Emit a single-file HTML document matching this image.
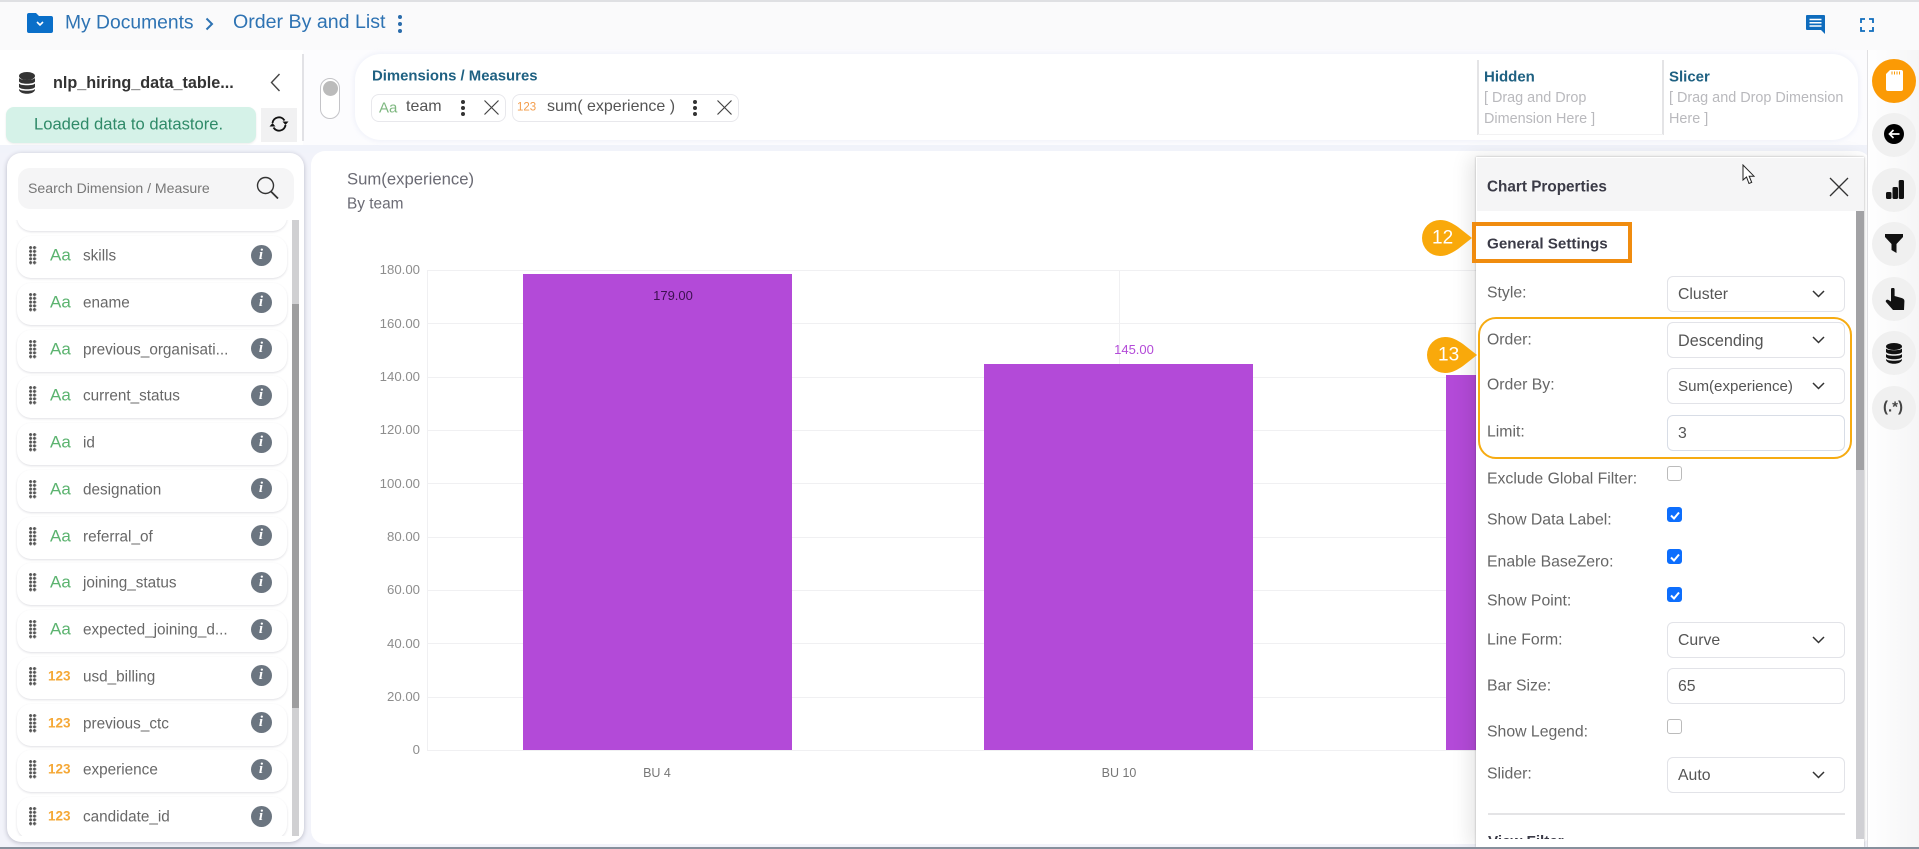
<!DOCTYPE html>
<html><head><meta charset="utf-8"><title>Order By and List</title>
<style>
*{box-sizing:border-box}
html,body{margin:0;padding:0}
body{width:1919px;height:849px;position:relative;overflow:hidden;background:#f2f3fa;font-family:"Liberation Sans",sans-serif;color:#666}
.a{position:absolute}
.t{position:absolute;white-space:nowrap;line-height:1;transform:translateY(-50%)}
.b{font-weight:bold}
.item{position:absolute;left:17px;width:270px;height:42px;background:#fff;border-radius:14px;box-shadow:0 1px 2px rgba(60,60,90,.16)}
.dots{position:absolute;left:12px;top:10px;width:8px;height:19px;background-image:radial-gradient(circle at 1.6px 1.6px,#555 1.35px,transparent 1.7px);background-size:3.9px 3.75px}
.ty{position:absolute;left:33px;top:19px;transform:translateY(-50%);line-height:1;font-size:17px;color:#5bb36f}
.ty.n{left:31px;font-size:13.5px;font-weight:bold;color:#f5a836}
.nm{position:absolute;left:66px;top:20px;transform:translateY(-50%);line-height:1;font-size:15.3px;color:#686868;white-space:nowrap}
.inf{position:absolute;left:233.5px;top:8.5px;width:21px;height:21px;border-radius:50%;background:#6b7580;color:#fff;font:italic bold 15px/21px "Liberation Serif",serif;text-align:center}
.sel{position:absolute;left:1667px;width:178px;height:36px;border:1.5px solid #e2e3e8;border-radius:6px;background:#fff;font-size:15.8px;color:#555;line-height:36px;padding-left:10px}
.sel svg{position:absolute;left:144px;top:13px}
.lb{position:absolute;left:1487px;white-space:nowrap;line-height:1;transform:translateY(calc(-50% + 1.5px));font-size:15.8px;color:#666}
.cb{position:absolute;left:1667px;width:15px;height:15px;border:1px solid #bbb;border-radius:3px;background:#fff}
.cb.on{background:#0d6efd;border-color:#0d6efd}
.cb svg{position:absolute;left:2px;top:2.5px}
.rc{position:absolute;left:1872px;width:44px;height:44px;border-radius:50%;background:#f0f0f0}
.chip{position:absolute;top:94px;height:28px;border:1px solid #e8e8ec;border-radius:8px;background:#fff}
</style></head>
<body>
<!-- top bar -->
<div class="a" style="left:0;top:0;width:1919px;height:50px;background:#fafafb"></div>
<div class="a" style="left:0;top:0;width:1919px;height:2px;background:#dfe0e3"></div>
<svg class="a" style="left:27px;top:13px" width="26" height="20" viewBox="0 0 26 20"><path d="M0 2a2 2 0 0 1 2-2h7l3 3h12a2 2 0 0 1 2 2v13a2 2 0 0 1-2 2H2a2 2 0 0 1-2-2z" fill="#0a6fc9"/><path d="M10 9l3 3 3-3" fill="none" stroke="#fff" stroke-width="1.6"/></svg>
<div class="t" style="left:65px;top:23px;font-size:19.3px;color:#2e73b3">My Documents</div>
<svg class="a" style="left:205px;top:17px" width="9" height="14" viewBox="0 0 9 14"><path d="M1.5 1.5L7 7l-5.5 5.5" fill="none" stroke="#2e73b3" stroke-width="2"/></svg>
<div class="t" style="left:233px;top:23px;font-size:19.6px;color:#2e73b3">Order By and List</div>
<svg class="a" style="left:396px;top:14px" width="8" height="20" viewBox="0 0 8 20"><g fill="#2a6cab"><circle cx="4" cy="3" r="2"/><circle cx="4" cy="10" r="2"/><circle cx="4" cy="17" r="2"/></g></svg>
<svg class="a" style="left:1806px;top:15px" width="19" height="19" viewBox="0 0 19 19"><path d="M1 0h17a1 1 0 0 1 1 1v18l-4-4H1a1 1 0 0 1-1-1V1a1 1 0 0 1 1-1z" fill="#0f6cbd"/><path d="M3.5 4.5h12M3.5 7.8h12M3.5 11h12" stroke="#fff" stroke-width="1.5"/></svg>
<svg class="a" style="left:1860px;top:18px" width="14" height="14" viewBox="0 0 14 14"><path d="M1 5V1h4M9 1h4v4M13 9v4H9M5 13H1V9" fill="none" stroke="#0f6cbd" stroke-width="1.8"/></svg>

<!-- second row -->
<div class="a" style="left:0;top:50px;width:1867px;height:95px;background:#fcfcfe"></div>
<div class="a" style="left:0;top:50px;width:303px;height:95px;background:#fff"></div>
<div class="a" style="left:0;top:145px;width:1867px;height:8px;background:#f1f3fa"></div>
<svg class="a" style="left:19px;top:72px" width="16" height="22" viewBox="0 0 16 22"><g fill="#333"><ellipse cx="8" cy="4" rx="8" ry="4"/><path d="M0 6c1.5 2.4 14.5 2.4 16 0v3.5c-1.5 3-14.5 3-16 0z"/><path d="M0 11.5c1.5 2.4 14.5 2.4 16 0V15c-1.5 3-14.5 3-16 0z"/><path d="M0 17c1.5 2.4 14.5 2.4 16 0v1c-1.5 5-14.5 5-16 0z"/></g></svg>
<div class="t b" style="left:53px;top:83px;font-size:16.2px;color:#333">nlp_hiring_data_table...</div>
<svg class="a" style="left:270px;top:73px" width="11" height="19" viewBox="0 0 11 19"><path d="M9.5 1L1.5 9.5l8 8.5" fill="none" stroke="#444" stroke-width="1.4"/></svg>
<div class="a" style="left:302px;top:54px;width:2px;height:87px;background:#e2e2e6"></div>
<div class="a" style="left:6px;top:107px;width:250px;height:36px;border-radius:8px;background:#d5f2e8;box-shadow:0 1px 2px rgba(0,0,0,.08)"></div>
<div class="t" style="left:34px;top:125px;font-size:16.6px;color:#2f8a68">Loaded data to datastore.</div>
<div class="a" style="left:261px;top:108px;width:36px;height:34px;background:#f1f1f2"></div>
<svg class="a" style="left:269px;top:115px" width="20" height="18" viewBox="0 0 20 18"><path d="M3.5 8A6.5 6.5 0 0 1 15.5 5.500M16.500 10A6.500 6.500 0 0 1 4.500 12.500" fill="none" stroke="#111" stroke-width="1.9"/><path d="M13.500 6.500h6L16.500 10zM6.500 11.500h-6L3.500 8z" fill="#111"/></svg>
<div class="a" style="left:320px;top:78px;width:20px;height:41px;border:1.5px solid #c4c4c8;border-radius:10px;background:#fff"></div>
<div class="a" style="left:322.5px;top:81px;width:15px;height:15px;border-radius:50%;background:#bbb"></div>

<!-- dimension bar -->
<div class="a" style="left:355px;top:54px;width:1503px;height:86px;border-radius:26px;background:#fff;box-shadow:0 0 6px rgba(225,230,245,.7)"></div>
<div class="t b" style="left:372px;top:77px;font-size:14.9px;color:#1f6182">Dimensions / Measures</div>
<div class="chip" style="left:371px;width:135px"></div>
<div class="t" style="left:379px;top:108px;font-size:15px;color:#7db77f">Aa</div>
<div class="t" style="left:406px;top:107px;font-size:16px;color:#555">team</div>
<svg class="a" style="left:459px;top:98px" width="8" height="20" viewBox="0 0 8 20"><g fill="#333"><circle cx="4" cy="4" r="2"/><circle cx="4" cy="10" r="2"/><circle cx="4" cy="16" r="2"/></g></svg>
<svg class="a" style="left:484px;top:100px" width="15" height="15" viewBox="0 0 15 15"><path d="M.5.5l14 14M14.500.5l-14 14" stroke="#444" stroke-width="1.2"/></svg>
<div class="chip" style="left:512px;width:227px"></div>
<div class="t" style="left:517px;top:108px;font-size:11.5px;color:#f39c4a">123</div>
<div class="t" style="left:547px;top:107px;font-size:16px;color:#555">sum( experience )</div>
<svg class="a" style="left:691px;top:98px" width="8" height="20" viewBox="0 0 8 20"><g fill="#333"><circle cx="4" cy="4" r="2"/><circle cx="4" cy="10" r="2"/><circle cx="4" cy="16" r="2"/></g></svg>
<svg class="a" style="left:717px;top:100px" width="15" height="15" viewBox="0 0 15 15"><path d="M.5.5l14 14M14.500.5l-14 14" stroke="#444" stroke-width="1.2"/></svg>
<div class="a" style="left:1477px;top:60px;width:2px;height:75px;background:#e4e4e6"></div>
<div class="a" style="left:1662px;top:60px;width:2px;height:75px;background:#e4e4e6"></div>
<div class="a" style="left:1478px;top:134px;width:185px;height:1px;background:#f2f2f3"></div>
<div class="t b" style="left:1484px;top:77px;font-size:15px;color:#1f6182">Hidden</div>
<div class="t" style="left:1484px;top:98px;font-size:14.4px;color:#b9b9bd">[ Drag and Drop</div>
<div class="t" style="left:1484px;top:119px;font-size:14.4px;color:#b9b9bd">Dimension Here ]</div>
<div class="t b" style="left:1669px;top:77px;font-size:15px;color:#1f6182">Slicer</div>
<div class="t" style="left:1669px;top:98px;font-size:14.4px;color:#b9b9bd">[ Drag and Drop Dimension</div>
<div class="t" style="left:1669px;top:119px;font-size:14.4px;color:#b9b9bd">Here ]</div>

<!-- left panel -->
<div class="a" style="left:7px;top:153px;width:297px;height:689px;background:#fff;border-radius:14px;box-shadow:0 1px 5px rgba(50,50,80,.3)"></div>
<div class="a" style="left:18px;top:168px;width:276px;height:41px;background:#f5f5f6;border-radius:12px"></div>
<div class="t" style="left:28px;top:188px;font-size:14.1px;color:#777">Search Dimension / Measure</div>
<svg class="a" style="left:256px;top:176px" width="23" height="23" viewBox="0 0 23 23"><circle cx="9.5" cy="9.5" r="8" fill="none" stroke="#333" stroke-width="1.4"/><path d="M15 15.500l7 7" stroke="#333" stroke-width="1.8"/></svg>
<div class="a" style="left:0;top:220px;width:292px;height:616px;overflow:hidden">
 <div class="item" style="top:-31px"></div>
 <div class="item" style="top:16px"><i class="dots"></i><span class="ty">Aa</span><span class="nm">skills</span><span class="inf">i</span></div>
 <div class="item" style="top:63px"><i class="dots"></i><span class="ty">Aa</span><span class="nm">ename</span><span class="inf">i</span></div>
 <div class="item" style="top:109.5px"><i class="dots"></i><span class="ty">Aa</span><span class="nm">previous_organisati...</span><span class="inf">i</span></div>
 <div class="item" style="top:156.2px"><i class="dots"></i><span class="ty">Aa</span><span class="nm">current_status</span><span class="inf">i</span></div>
 <div class="item" style="top:203px"><i class="dots"></i><span class="ty">Aa</span><span class="nm">id</span><span class="inf">i</span></div>
 <div class="item" style="top:249.7px"><i class="dots"></i><span class="ty">Aa</span><span class="nm">designation</span><span class="inf">i</span></div>
 <div class="item" style="top:296.5px"><i class="dots"></i><span class="ty">Aa</span><span class="nm">referral_of</span><span class="inf">i</span></div>
 <div class="item" style="top:343.2px"><i class="dots"></i><span class="ty">Aa</span><span class="nm">joining_status</span><span class="inf">i</span></div>
 <div class="item" style="top:390px"><i class="dots"></i><span class="ty">Aa</span><span class="nm">expected_joining_d...</span><span class="inf">i</span></div>
 <div class="item" style="top:436.7px"><i class="dots"></i><span class="ty n">123</span><span class="nm">usd_billing</span><span class="inf">i</span></div>
 <div class="item" style="top:483.5px"><i class="dots"></i><span class="ty n">123</span><span class="nm">previous_ctc</span><span class="inf">i</span></div>
 <div class="item" style="top:530.2px"><i class="dots"></i><span class="ty n">123</span><span class="nm">experience</span><span class="inf">i</span></div>
 <div class="item" style="top:577px"><i class="dots"></i><span class="ty n">123</span><span class="nm">candidate_id</span><span class="inf">i</span></div>
</div>
<div class="a" style="left:292px;top:220px;width:7px;height:616px;background:#d0d0d2"></div>
<div class="a" style="left:292px;top:304px;width:7px;height:404px;background:#9e9e9f"></div>

<!-- chart card -->
<div class="a" style="left:311px;top:151px;width:1560px;height:693px;background:#fff;border-radius:14px"></div>
<div class="t" style="left:347px;top:180px;font-size:16.7px;color:#6b6b74">Sum(experience)</div>
<div class="t" style="left:347px;top:204px;font-size:15.4px;color:#6b6b74">By team</div>
<svg class="a" style="left:311px;top:250px" width="1170" height="530" viewBox="311 250 1170 530" font-family="Liberation Sans, sans-serif">
 <g stroke="#f0f0f2" stroke-width="1">
  <path d="M427 270.5H1480M427 323.5H1480M427 377.5H1480M427 430.5H1480M427 483.5H1480M427 537.5H1480M427 590.5H1480M427 643.5H1480M427 697.500H1480M427 750.5H1480"/>
  <path d="M427.5 270V750M1119.5 270V750"/>
 </g>
 <g fill="#8d8d8d" font-size="13.2" text-anchor="end">
  <text x="420" y="274">180.00</text><text x="420" y="328">160.00</text><text x="420" y="381">140.00</text><text x="420" y="434">120.00</text><text x="420" y="488">100.00</text><text x="420" y="541">80.00</text><text x="420" y="594">60.00</text><text x="420" y="648">40.00</text><text x="420" y="701">20.00</text><text x="420" y="754">0</text>
 </g>
 <rect x="523" y="274" width="269" height="476" fill="#b34ad8"/>
 <rect x="984" y="364" width="269" height="386" fill="#b34ad8"/>
 <rect x="1446" y="375" width="34" height="375" fill="#b34ad8"/>
 <text x="673" y="300" font-size="13" fill="#3c1050" text-anchor="middle">179.00</text>
 <text x="1134" y="354" font-size="13" fill="#b34ad8" text-anchor="middle">145.00</text>
 <g fill="#777" font-size="12.5" text-anchor="middle"><text x="657" y="777">BU 4</text><text x="1119" y="777">BU 10</text></g>
</svg>

<!-- chart properties -->
<div class="a" style="left:1476px;top:157px;width:388px;height:690px;background:#fff;box-shadow:-6px 0 18px rgba(0,0,0,.10),0 0 2px rgba(0,0,0,.3)"></div>
<div class="a" style="left:1477px;top:158px;width:387px;height:53px;background:#f5f5f6"></div>
<div class="t b" style="left:1487px;top:187px;font-size:15.3px;color:#3b3b47">Chart Properties</div>
<svg class="a" style="left:1829px;top:177px" width="20" height="20" viewBox="0 0 20 20"><path d="M1 1l18 18M19 1L1 19" stroke="#333" stroke-width="1.3"/></svg>
<div class="a" style="left:1856px;top:211px;width:8px;height:628px;background:#d0d0d4"></div>
<div class="a" style="left:1856px;top:211px;width:8px;height:259px;background:#a2a2a5"></div>

<div class="a" style="left:1472px;top:222px;width:160px;height:41px;border:4px solid #f08c0f"></div>
<div class="t b" style="left:1487px;top:244px;font-size:15.2px;color:#3b3b47">General Settings</div>
<svg class="a" style="left:1421px;top:219px" width="52" height="38" viewBox="0 0 52 38"><path d="M19 1c7 0 12 3 18 7l14 11-14 11c-6 4-11 7-18 7A18 18 0 0 1 19 1z" fill="#f9a90b"/></svg>
<div class="t" style="left:1432px;top:238px;font-size:19px;color:#fff">12</div>

<div class="lb" style="top:292px">Style:</div>
<div class="sel" style="top:276px">Cluster<svg width="13" height="8" viewBox="0 0 13 8"><path d="M1 1l5.5 5.500L12 1" fill="none" stroke="#333" stroke-width="1.5"/></svg></div>
<div class="a" style="left:1478px;top:317px;width:374px;height:142px;border:2px solid #f6ab12;border-radius:18px"></div>
<svg class="a" style="left:1426px;top:336px" width="52" height="38" viewBox="0 0 52 38"><path d="M19 1c7 0 12 3 18 7l14 11-14 11c-6 4-11 7-18 7A18 18 0 0 1 19 1z" fill="#f9a90b"/></svg>
<div class="t" style="left:1438px;top:355px;font-size:19px;color:#fff">13</div>
<div class="lb" style="top:339px">Order:</div>
<div class="sel" style="top:322px;font-size:16.2px">Descending<svg width="13" height="8" viewBox="0 0 13 8"><path d="M1 1l5.5 5.500L12 1" fill="none" stroke="#333" stroke-width="1.5"/></svg></div>
<div class="lb" style="top:384px">Order By:</div>
<div class="sel" style="top:368px;font-size:15.1px">Sum(experience)<svg width="13" height="8" viewBox="0 0 13 8"><path d="M1 1l5.5 5.500L12 1" fill="none" stroke="#333" stroke-width="1.5"/></svg></div>
<div class="lb" style="top:431px">Limit:</div>
<div class="sel" style="top:415px;border-color:#d8dde6">3</div>
<div class="lb" style="top:478px">Exclude Global Filter:</div>
<div class="cb" style="top:466px"></div>
<div class="lb" style="top:519px">Show Data Label:</div>
<div class="cb on" style="top:507px"><svg width="10" height="9" viewBox="0 0 10 9"><path d="M1 4.5l3 3 5-6" fill="none" stroke="#fff" stroke-width="2"/></svg></div>
<div class="lb" style="top:561px">Enable BaseZero:</div>
<div class="cb on" style="top:549px"><svg width="10" height="9" viewBox="0 0 10 9"><path d="M1 4.5l3 3 5-6" fill="none" stroke="#fff" stroke-width="2"/></svg></div>
<div class="lb" style="top:600px">Show Point:</div>
<div class="cb on" style="top:587px"><svg width="10" height="9" viewBox="0 0 10 9"><path d="M1 4.5l3 3 5-6" fill="none" stroke="#fff" stroke-width="2"/></svg></div>
<div class="lb" style="top:639px">Line Form:</div>
<div class="sel" style="top:622px">Curve<svg width="13" height="8" viewBox="0 0 13 8"><path d="M1 1l5.5 5.500L12 1" fill="none" stroke="#333" stroke-width="1.5"/></svg></div>
<div class="lb" style="top:685px">Bar Size:</div>
<div class="sel" style="top:668px">65</div>
<div class="lb" style="top:731px">Show Legend:</div>
<div class="cb" style="top:719px"></div>
<div class="lb" style="top:773px">Slider:</div>
<div class="sel" style="top:757px">Auto<svg width="13" height="8" viewBox="0 0 13 8"><path d="M1 1l5.5 5.500L12 1" fill="none" stroke="#333" stroke-width="1.5"/></svg></div>
<div class="a" style="left:1488px;top:813px;width:357px;height:2px;background:#e4e4e6"></div>
<div class="a" style="left:1488px;top:834px;width:120px;height:5px;overflow:hidden"><div class="b" style="font-size:15.2px;line-height:16px;color:#3b3b47;white-space:nowrap">View Filter</div></div>

<!-- cursor -->
<svg class="a" style="left:1742px;top:164px" width="14" height="21" viewBox="0 0 14 21"><path d="M1 1v15l3.500-3 2.500 6.500 2.700-1.100-2.500-6.200H12z" fill="#fff" stroke="#222" stroke-width="1"/></svg>

<!-- right rail -->
<div class="a" style="left:1867px;top:50px;width:52px;height:797px;background:linear-gradient(90deg,#fff,#f5f5f6);border-left:1px solid #e0e0e3"></div>
<div class="rc" style="top:59px;background:#fb9a05"></div>
<svg class="a" style="left:1886px;top:70px" width="17" height="21" viewBox="0 0 17 21"><path d="M4 0h11a2 2 0 0 1 2 2v17a2 2 0 0 1-2 2H2a2 2 0 0 1-2-2V4z" fill="#fff"/><path d="M6 1.500v3M8.500 1.500v3M11 1.500v3M13.500 1.500v3" stroke="#fb9a05" stroke-width="1"/></svg>
<div class="rc" style="top:113px"></div>
<svg class="a" style="left:1884px;top:124px" width="20" height="20" viewBox="0 0 20 20"><circle cx="10" cy="10" r="10" fill="#000"/><path d="M15.500 10H6M9.500 6l-4 4 4 4" fill="none" stroke="#fff" stroke-width="1.7"/></svg>
<div class="rc" style="top:168px"></div>
<svg class="a" style="left:1886px;top:180px" width="18" height="19" viewBox="0 0 18 19"><rect x="0" y="12" width="5.500" height="7" rx="1.500" fill="#111"/><rect x="6.500" y="7" width="5.500" height="12" rx="1.500" fill="#111"/><rect x="12.700" y="0" width="5.300" height="19" rx="1.500" fill="#111"/></svg>
<div class="rc" style="top:222px"></div>
<svg class="a" style="left:1885px;top:234px" width="18" height="19" viewBox="0 0 18 19"><path d="M0 0h18v3L11.500 10v9l-5-3v-6L0 3z" fill="#111"/></svg>
<div class="rc" style="top:277px"></div>
<svg class="a" style="left:1885px;top:288px" width="20" height="22" viewBox="0 0 20 22"><path d="M6 1.500a1.800 1.800 0 0 1 3.600 0V8l7 2c2 .6 3 1.700 2.800 3.500L19 22H8L1 14c-1-1.500 1-3.200 2.500-2L6 13.500z" fill="#111"/></svg>
<div class="rc" style="top:331px"></div>
<svg class="a" style="left:1886px;top:343px" width="16" height="21" viewBox="0 0 16 21"><g fill="#111"><ellipse cx="8" cy="3.500" rx="8" ry="3.500"/><path d="M0 5.500c1.500 2.400 14.500 2.400 16 0V9c-1.500 3-14.500 3-16 0z"/><path d="M0 11c1.500 2.400 14.500 2.400 16 0v3c-1.500 3-14.500 3-16 0z"/><path d="M0 16c1.500 2.400 14.500 2.400 16 0v1c-1.500 5-14.500 5-16 0z"/></g></svg>
<div class="rc" style="top:386px"></div>
<div class="t" style="left:1883px;top:407px;font-size:15px;font-weight:bold;color:#444">(.*)</div>

<!-- bottom line -->
<div class="a" style="left:0;top:847px;width:1919px;height:2px;background:#87909c"></div>
</body></html>
